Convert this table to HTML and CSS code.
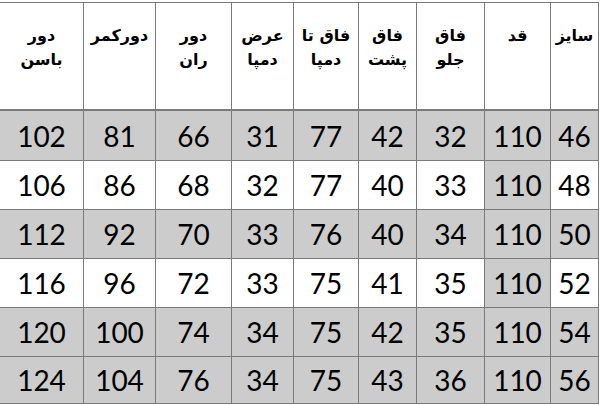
FILE: index.html
```
<!DOCTYPE html>
<html lang="fa" dir="rtl">
<head>
<meta charset="utf-8">
<link rel="stylesheet" href="styles.css">
</head>
<body>
<div class="sheet">
  <div class="hd">سایز</div>
  <div class="hd">قد</div>
  <div class="hd">فاق<br>جلو</div>
  <div class="hd">فاق<br>پشت</div>
  <div class="hd">فاق تا<br>دمپا</div>
  <div class="hd">عرض<br>دمپا</div>
  <div class="hd">دور<br>ران</div>
  <div class="hd">دورکمر</div>
  <div class="hd">دور<br>باسن</div>

  <div class="c g">46</div><div class="c g">110</div><div class="c g">32</div><div class="c g">42</div><div class="c g">77</div><div class="c g">31</div><div class="c g">66</div><div class="c g">81</div><div class="c g">102</div>
  <div class="c">48</div><div class="c g">110</div><div class="c">33</div><div class="c">40</div><div class="c">77</div><div class="c">32</div><div class="c">68</div><div class="c">86</div><div class="c">106</div>
  <div class="c g">50</div><div class="c g">110</div><div class="c g">34</div><div class="c g">40</div><div class="c g">76</div><div class="c g">33</div><div class="c g">70</div><div class="c g">92</div><div class="c g">112</div>
  <div class="c">52</div><div class="c g">110</div><div class="c">35</div><div class="c">41</div><div class="c">75</div><div class="c">33</div><div class="c">72</div><div class="c">96</div><div class="c">116</div>
  <div class="c g">54</div><div class="c g">110</div><div class="c g">35</div><div class="c g">42</div><div class="c g">75</div><div class="c g">34</div><div class="c g">74</div><div class="c g">100</div><div class="c g">120</div>
  <div class="c g">56</div><div class="c g">110</div><div class="c g">36</div><div class="c g">43</div><div class="c g">75</div><div class="c g">34</div><div class="c g">76</div><div class="c g">104</div><div class="c g">124</div>
</div>
</body>
</html>
```
FILE: styles.css
```
html, body {
  margin: 0;
  padding: 0;
  background: #ffffff;
}
body {
  direction: rtl;
  width: 602px;
  height: 405px;
  overflow: hidden;
}
.sheet {
  margin-top: 2px;
  margin-right: 3px;
  width: 599px;
  box-sizing: border-box;
  padding: 1px 1px 1px 0;
  background: #7a7a7a;
  display: grid;
  grid-template-columns: 47px 65px 67px 57px 64px 61px 75px 71px 83px;
  grid-template-rows: 107px 49px 48px 48px 48px 48px 46px;
  gap: 1px;
}
.hd {
  background: #ffffff;
  margin-bottom: 1px;
  text-align: center;
  font-family: "DejaVu Sans", sans-serif;
  font-weight: bold;
  font-size: 16px;
  line-height: 24px;
  padding-top: 21px;
  color: #000;
}
.c {
  background: #ffffff;
  display: flex;
  align-items: center;
  justify-content: center;
  font-family: Lato, "Open Sans", sans-serif;
  font-size: 28px;
  color: #000;
}
.g {
  background: #cccccc;
}
```
